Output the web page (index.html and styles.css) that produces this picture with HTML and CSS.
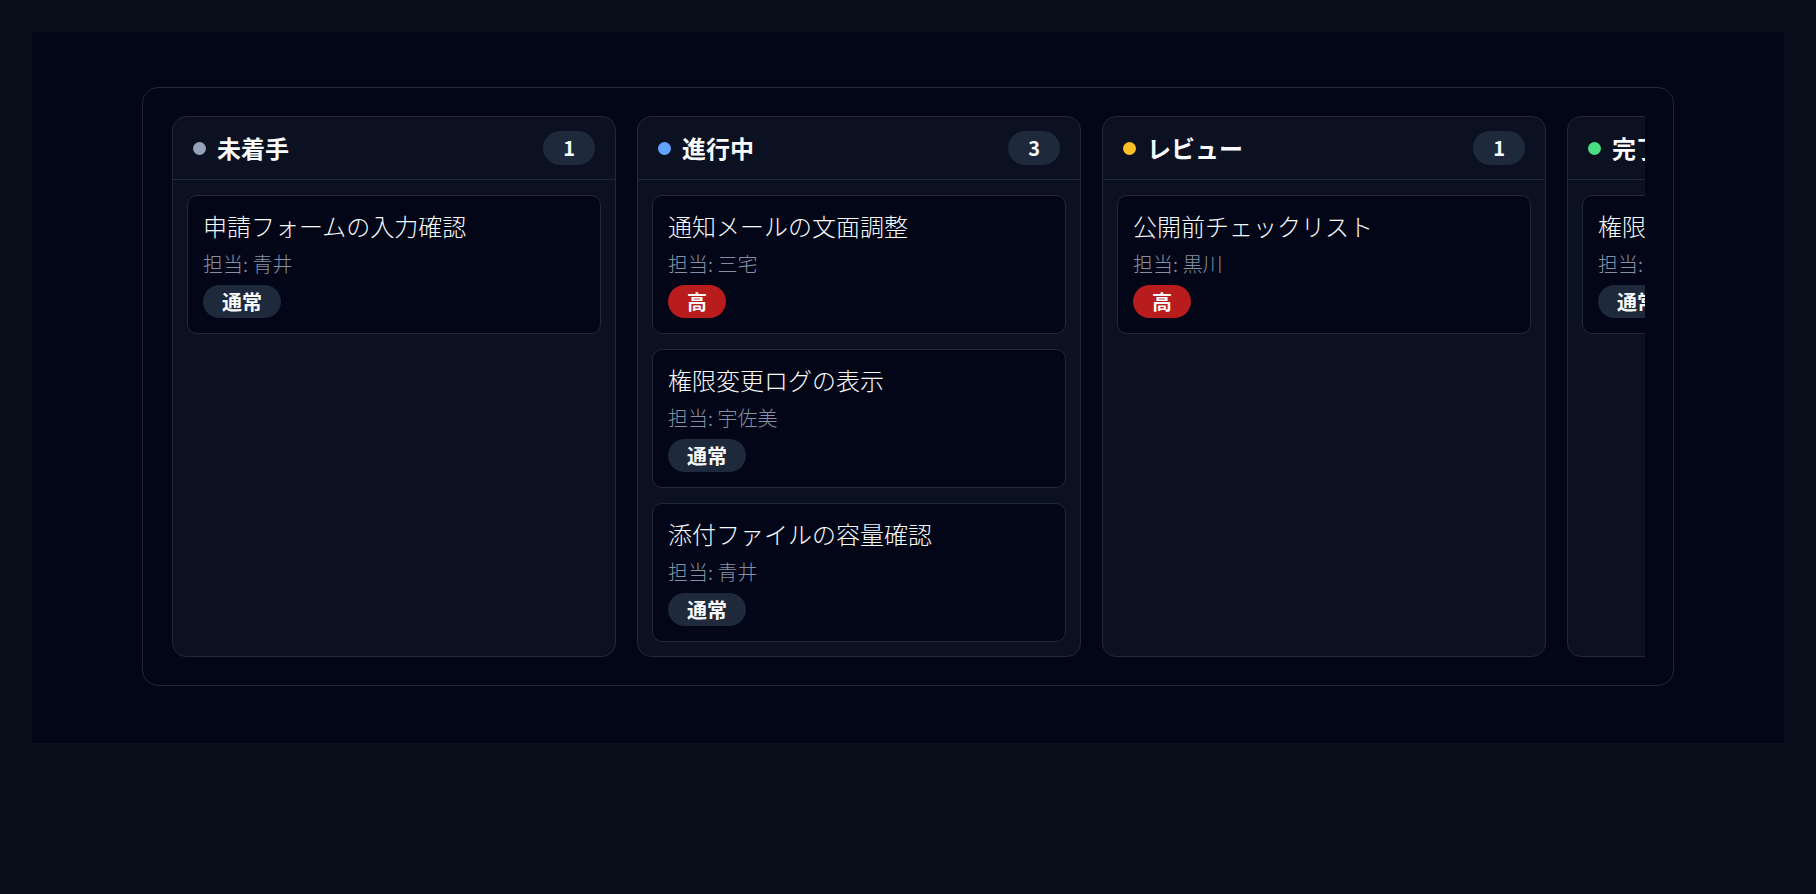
FILE: index.html
```html
<!DOCTYPE html>
<html lang="ja">
<head>
  <meta charset="UTF-8" />
  <meta name="viewport" content="width=device-width, initial-scale=1.0"/>
  <title>タスクボード</title>
  <link rel="stylesheet" href="styles.css">
</head>
<body>

  <div class="stage">
    <div class="board-panel">
      <div class="board">

        <section class="column">
          <header class="column-head">
            <span class="dot dot-todo"></span>
            <h2>未着手</h2>
            <span class="count">1</span>
          </header>
          <div class="column-body">
            <div class="card">
              <h3>申請フォームの入力確認</h3>
              <p class="owner">担当: 青井</p>
              <span class="tag">通常</span>
            </div>
          </div>
        </section>

        <section class="column">
          <header class="column-head">
            <span class="dot dot-doing"></span>
            <h2>進行中</h2>
            <span class="count">3</span>
          </header>
          <div class="column-body">
            <div class="card">
              <h3>通知メールの文面調整</h3>
              <p class="owner">担当: 三宅</p>
              <span class="tag tag-high">高</span>
            </div>
            <div class="card">
              <h3>権限変更ログの表示</h3>
              <p class="owner">担当: 宇佐美</p>
              <span class="tag">通常</span>
            </div>
            <div class="card">
              <h3>添付ファイルの容量確認</h3>
              <p class="owner">担当: 青井</p>
              <span class="tag">通常</span>
            </div>
          </div>
        </section>

        <section class="column">
          <header class="column-head">
            <span class="dot dot-review"></span>
            <h2>レビュー</h2>
            <span class="count">1</span>
          </header>
          <div class="column-body">
            <div class="card">
              <h3>公開前チェックリスト</h3>
              <p class="owner">担当: 黒川</p>
              <span class="tag tag-high">高</span>
            </div>
          </div>
        </section>

        <section class="column">
          <header class="column-head">
            <span class="dot dot-done"></span>
            <h2>完了</h2>
            <span class="count">1</span>
          </header>
          <div class="column-body">
            <div class="card">
              <h3>権限設定の初期化</h3>
              <p class="owner">担当: 黒川</p>
              <span class="tag">通常</span>
            </div>
          </div>
        </section>

      </div>
    </div>
  </div>

</body>
</html>
```

FILE: styles.css
```css
body {
  font-family: "Noto Sans CJK JP", "Noto Sans", sans-serif;
  margin: 0;
  padding: 32px;
  background: #0a0f1c;
  color: #f8fafc;
  min-height: 100vh;
  box-sizing: border-box;
}

.stage {
  background: #020617;
  padding: 55px 110px 57px;
}

.board-panel {
  border: 1px solid #1e293b;
  border-radius: 16px;
  padding: 28px 28px 28px 29px;
}

.board {
  display: flex;
  gap: 21px;
  overflow: hidden;
}

.column {
  flex: 0 0 444px;
  box-sizing: border-box;
  display: flex;
  flex-direction: column;
  background: #0b1120;
  border: 1px solid #1e293b;
  border-radius: 14px;
}

.column-head {
  display: flex;
  align-items: center;
  gap: 11px;
  padding: 14px 20px 14px;
  border-bottom: 1px solid #1e293b;
}

.column-head h2 {
  margin: 0;
  flex: 1;
  font-size: 24px;
  font-weight: 700;
  line-height: 32px;
}

.dot {
  width: 13px;
  height: 13px;
  border-radius: 50%;
  flex: 0 0 13px;
}

.dot-todo { background: #94a3b8; }
.dot-doing { background: #60a5fa; }
.dot-review { background: #fbbf24; }
.dot-done { background: #4ade80; }

.count {
  background: #1e293b;
  border-radius: 999px;
  padding: 4px 20px;
  font-size: 20px;
  font-weight: 600;
  line-height: 26px;
}

.column-body {
  flex: 1;
  display: flex;
  flex-direction: column;
  gap: 15px;
  padding: 15px 14px 14px;
}

.card {
  display: flex;
  flex-direction: column;
  align-items: flex-start;
  gap: 7px;
  background: #020617;
  border: 1px solid #1e293b;
  border-radius: 10px;
  padding: 13px 15px 15px;
}

.card h3 {
  margin: 0;
  font-size: 24px;
  font-weight: 300;
  line-height: 34px;
  white-space: nowrap;
}

.owner {
  margin: 0;
  font-size: 20px;
  font-weight: 300;
  line-height: 28px;
  color: #8591a5;
  white-space: nowrap;
}

.tag {
  background: #1e293b;
  border-radius: 999px;
  padding: 4px 19px;
  font-size: 20px;
  font-weight: 700;
  line-height: 25px;
  white-space: nowrap;
}

.tag-high {
  background: #b91c1c;
}
```
